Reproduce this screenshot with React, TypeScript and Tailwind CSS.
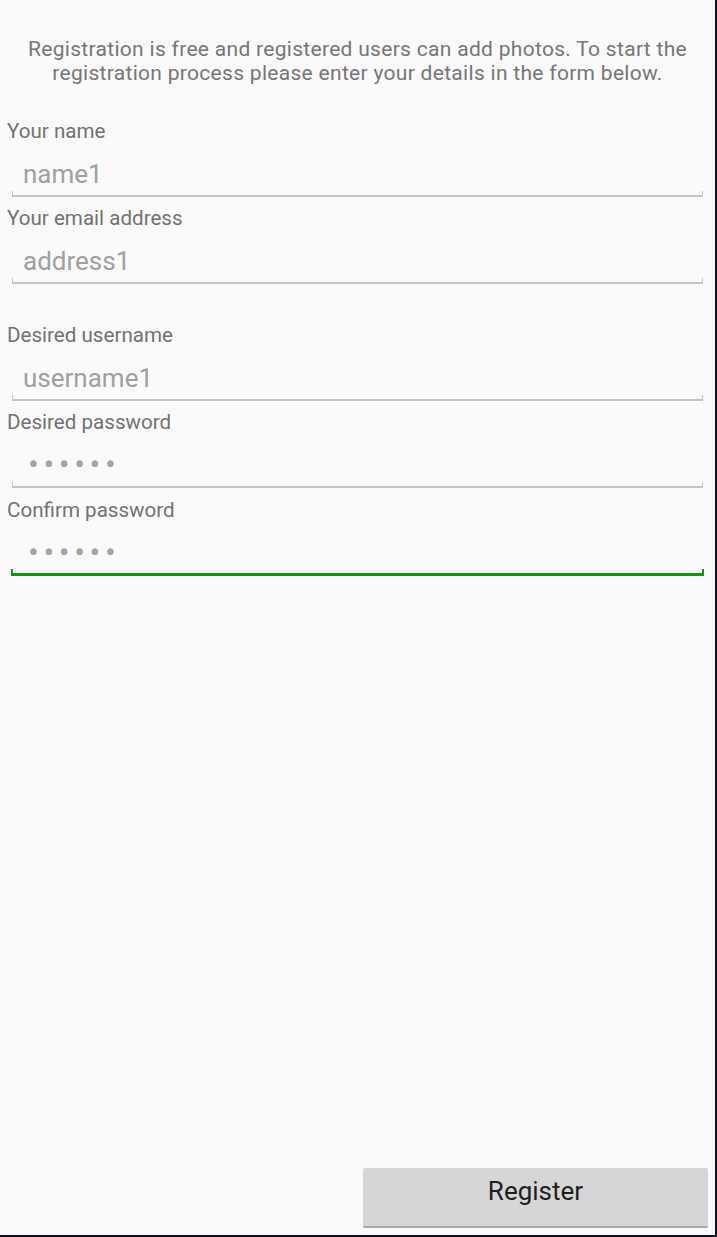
import React from "react";

const font = { fontFamily: "Roboto, 'Noto Sans', sans-serif" };

function Underline({ focused }: { focused?: boolean }) {
  if (focused) {
    return (
      <div className="mt-[1px] -mx-[1px] h-[7px] border-b-[3px] border-l-2 border-r-2 border-[#0c9a0c]" />
    );
  }
  return <div className="mt-[2px] h-[6px] border-b-2 border-l border-r border-[#c4c4c4]" />;
}

function Field({
  label,
  value,
  password,
  focused,
  className,
}: {
  label: string;
  value: string;
  password?: boolean;
  focused?: boolean;
  className?: string;
}) {
  return (
    <div className={className}>
      <div className="pl-[7px] text-[20.6px] leading-[24px] text-[#727272]">{label}</div>
      <div className="ml-[12px] mr-[12px]">
        <div className="h-[46px] pt-[16px] pl-[11px] text-[26px] leading-[30px] text-[#a0a0a0] whitespace-nowrap overflow-visible">
          {password ? (
            <span className="relative top-[-1px] left-[5px] text-[32px] leading-[30px] tracking-[4.6px] text-[#a4a4a4]">
              {value}
            </span>
          ) : (
            value
          )}
        </div>
        <Underline focused={focused} />
      </div>
    </div>
  );
}

export default function App() {
  return (
    <div className="w-[717px] h-[1237px] bg-[#10102a] pr-[2px] pb-[2px]" style={font}>
      <div className="h-full w-full bg-[#fafafa] flex flex-col">
        <div className="pt-[37px] px-[4px] text-center text-[21px] leading-[24px] tracking-[0.3px] text-[#767676] whitespace-nowrap">
          Registration is free and registered users can add photos. To start the
          <br />
          registration process please enter your details in the form below.
        </div>
        <div className="mt-[34px] flex flex-col">
          <Field label="Your name" value="name1" />
          <Field className="mt-[9px]" label="Your email address" value="address1" />
          <Field className="mt-[39px]" label="Desired username" value="username1" />
          <Field className="mt-[9px]" label="Desired password" value="••••••" password />
          <Field className="mt-[10px]" label="Confirm password" value="••••••" password focused />
        </div>
        <div className="flex-1" />
        <div className="flex justify-end pr-[7px] pb-[7px]">
          <button className="w-[345px] h-[60px] rounded-[2px] bg-[#d6d6d6] border-b-2 border-[#a8a8a8] pt-[8px] text-[26px] leading-[30px] text-[#1e1e1e] flex justify-center items-start">
            Register
          </button>
        </div>
      </div>
    </div>
  );
}
